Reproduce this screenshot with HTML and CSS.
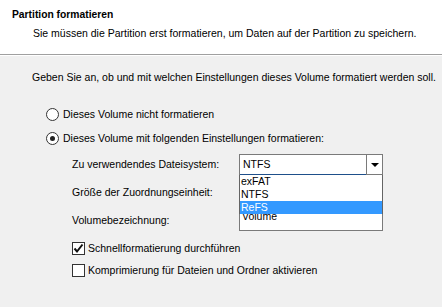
FILE: index.html
```html
<!DOCTYPE html>
<html lang="de">
<head>
    <meta charset="UTF-8">
    <title>Partition formatieren</title>
    <link rel="stylesheet" href="styles.css">
</head>
<body>
    <div class="header">
        <div class="title">Partition formatieren</div>
        <div class="subtitle">Sie müssen die Partition erst formatieren, um Daten auf der Partition zu speichern.</div>
    </div>

    <div class="content">
        <p class="intro">Geben Sie an, ob und mit welchen Einstellungen dieses Volume formatiert werden soll.</p>

        <div class="option"><span class="radio"></span>Dieses Volume nicht formatieren</div>
        <div class="option"><span class="radio checked"></span>Dieses Volume mit folgenden Einstellungen formatieren:</div>

        <div class="settings">
            <label>Zu verwendendes Dateisystem:</label>
            <div class="combo open">
                <span class="value">NTFS</span>
                <span class="button"><span class="arrow"></span></span>
                <ul class="droplist">
                    <li>exFAT</li>
                    <li>NTFS</li>
                    <li class="selected">ReFS</li>
                </ul>
            </div>

            <label>Größe der Zuordnungseinheit:</label>
            <div class="combo">
                <span class="value">Standard</span>
                <span class="button"><span class="arrow"></span></span>
            </div>

            <label>Volumebezeichnung:</label>
            <div class="textbox">Volume</div>
        </div>

        <div class="check">
            <span class="box">
                <svg width="11" height="11" viewBox="0 0 11 11"><path d="M1.5 5.5 L4 8.5 L9.5 1.5" fill="none" stroke="#111" stroke-width="2"/></svg>
            </span>Schnellformatierung durchführen
        </div>
        <div class="check"><span class="box"></span>Komprimierung für Dateien und Ordner aktivieren</div>
    </div>
</body>
</html>
```

FILE: styles.css
```css
body {
    margin: 0;
    background-color: #f0f0f0;
    font-family: "Liberation Sans", Arial, sans-serif;
    font-size: 10.5px;
    line-height: 13px;
    color: #000;
}
.header {
    background: #fff;
    height: 55px;
    box-sizing: border-box;
    padding: 8px 0 0 12px;
    border-bottom: 1px solid #a0a0a0;
}
.title {
    font-weight: bold;
    font-size: 10.3px;
}
.subtitle {
    margin: 6px 0 0 21px;
}
.content {
    border-top: 1px solid #fff;
    padding: 15px 0 0 32px;
}
.intro {
    margin: 0;
    white-space: nowrap;
}
.option {
    display: flex;
    align-items: center;
    height: 13px;
    margin: 11px 0 0 14px;
}
.intro + .option {
    margin-top: 24px;
}
.radio {
    width: 11px;
    height: 11px;
    border: 1px solid #333;
    border-radius: 50%;
    background: #fff;
    margin-right: 4px;
    display: flex;
    align-items: center;
    justify-content: center;
}
.radio.checked::after {
    content: "";
    width: 5px;
    height: 5px;
    border-radius: 50%;
    background: #222;
}
.settings {
    display: grid;
    grid-template-columns: 167px 144px;
    row-gap: 7px;
    align-items: center;
    margin: 9px 0 0 40px;
}
.combo, .textbox {
    position: relative;
    height: 21px;
    box-sizing: border-box;
    border: 1px solid #7a7a7a;
    background: #fff;
    display: flex;
}
.combo .value {
    flex: 1;
    padding: 3px 0 0 3px;
}
.combo.open .value {
    border-bottom: 1px solid #1e4f8a;
    margin-bottom: -1px;
}
.combo .button {
    width: 15px;
    border-left: 1px solid #7a7a7a;
    display: flex;
    align-items: center;
    justify-content: center;
}
.arrow {
    width: 0;
    height: 0;
    border-left: 4px solid transparent;
    border-right: 4px solid transparent;
    border-top: 4px solid #000;
    margin-top: 1px;
}
.droplist {
    position: absolute;
    top: 20px;
    left: -1px;
    width: 144px;
    box-sizing: border-box;
    margin: 0;
    padding: 0;
    list-style: none;
    background: #fff;
    border-left: 1px solid #646464;
    border-right: 1px solid #646464;
    z-index: 2;
}
.droplist li {
    height: 13px;
    padding-left: 1px;
}
.droplist li.selected {
    background: #3399ff;
    color: #fff;
}
.textbox {
    padding: 0 0 0 2px;
    line-height: 11px;
}
.check {
    display: flex;
    align-items: center;
    height: 13px;
    margin: 9px 0 0 40px;
}
.settings + .check {
    margin-top: 11px;
}
.box {
    width: 11px;
    height: 11px;
    border: 1px solid #333;
    background: #fff;
    margin-right: 3px;
    display: flex;
    align-items: center;
    justify-content: center;
}
```
